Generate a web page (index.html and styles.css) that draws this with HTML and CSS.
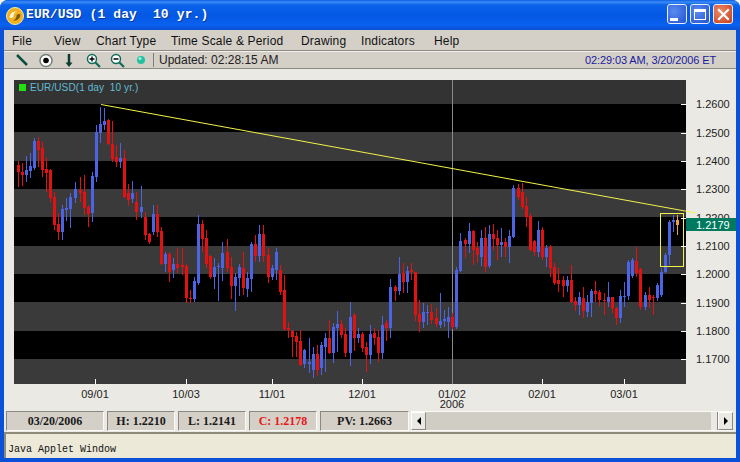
FILE: index.html
```html
<!DOCTYPE html>
<html lang="en">
<head>
<meta charset="utf-8">
<title>EUR/USD (1 day  10 yr.)</title>
<link rel="stylesheet" href="styles.css">
</head>
<body>
<div class="window">
  <header class="titlebar">
    <svg class="app-icon" width="20" height="20" viewBox="0 0 20 20">
      <circle cx="10" cy="10" r="8.5" fill="#f0b020" stroke="#fbe7a8"/>
      <path d="M4.5 11.5C5 7 8.5 5 12 5.5 9.5 6.5 8.5 8 8.5 10.5 8 12 6 12.500 4.500 11.500Z" fill="#fff6d0"/>
      <path d="M15.500 8.500C15 13 11.500 15 8 14.500 10.500 13.500 11.500 12 11.500 9.500 12 8 14 7.500 15.500 8.500Z" fill="#7a5a10"/>
    </svg>
    <span class="title-text">EUR/USD (1 day  10 yr.)</span>
    <div class="win-buttons">
      <span class="win-btn"><i class="glyph-min"></i></span>
      <span class="win-btn"><i class="glyph-max"></i></span>
      <span class="win-btn win-close">
        <svg width="13" height="13" viewBox="0 0 13 13"><path d="M2 2L11 11M11 2L2 11" stroke="#fff" stroke-width="2.200" stroke-linecap="square"/></svg>
      </span>
    </div>
  </header>
  <main class="content">
    <nav class="menubar">
      <span class="m-file">File</span>
      <span class="m-view">View</span>
      <span class="m-type">Chart Type</span>
      <span class="m-scale">Time Scale &amp; Period</span>
      <span class="m-draw">Drawing</span>
      <span class="m-ind">Indicators</span>
      <span>Help</span>
    </nav>
    <div class="toolbar">
      <svg class="tools" width="143" height="17" viewBox="0 0 143 17">
        <path d="M7 3L17 13" stroke="#0c4f40" stroke-width="2.500"/>
        <circle cx="36" cy="8.500" r="6" fill="#fff" stroke="#70807a" stroke-width="1.500"/>
        <circle cx="36" cy="8.500" r="2.800" fill="#000"/>
        <path d="M59 2V12" stroke="#0c3a30" stroke-width="2.500"/>
        <path d="M55.500 10.500H62.500L59 15Z" fill="#0c3a30"/>
        <circle cx="82" cy="7" r="4.500" fill="#fff" stroke="#0f6a58" stroke-width="1.500"/>
        <path d="M79.500 7H84.500M82 4.500V9.500" stroke="#000" stroke-width="1.400"/>
        <path d="M85.500 10.500L90 15" stroke="#0f6a58" stroke-width="2.200"/>
        <circle cx="106" cy="7" r="4.500" fill="#fff" stroke="#0f6a58" stroke-width="1.500"/>
        <path d="M103.500 7H108.500" stroke="#000" stroke-width="1.400"/>
        <path d="M109.500 10.500L114 15" stroke="#0f6a58" stroke-width="2.200"/>
        <circle cx="131" cy="8" r="4" fill="#25c0a0"/>
        <circle cx="130" cy="6.500" r="1.500" fill="#a0f0e0"/>
      </svg>
      <span class="divider"></span>
      <span class="updated">Updated: 02:28:15 AM</span>
      <span class="clock">02:29:03 AM, 3/20/2006 ET</span>
    </div>
    <svg id="chart" class="chart" width="732" height="342" viewBox="4 69 732 342"></svg>
    <div class="statusbar">
      <span class="cell c-date">03/20/2006</span>
      <span class="cell c-val">H: 1.2210</span>
      <span class="cell c-val">L: 1.2141</span>
      <span class="cell c-val c-red">C: 1.2178</span>
      <span class="cell c-pv">PV: 1.2663</span>
      <div class="scroll">
        <span class="sb-btn"><i class="arrow-left"></i></span>
        <span class="sb-track"></span>
        <span class="sb-thumb"></span>
        <span class="sb-btn"><i class="arrow-right"></i></span>
      </div>
    </div>
    <footer class="applet">Java Applet Window</footer>
  </main>
</div>
<script src="chart.js"></script>
</body>
</html>
```
FILE: styles.css
```css
* { box-sizing: border-box; }
html, body { margin: 0; padding: 0; }
body { width: 740px; height: 462px; background: #f4f4f4; overflow: hidden; font-family: "Liberation Sans", Arial, sans-serif; }
.window { width: 740px; height: 462px; display: flex; flex-direction: column; border-radius: 8px 8px 0 0; overflow: hidden; background: #0a50d8; }
.titlebar { height: 30px; flex: none; display: flex; align-items: center; padding: 0 7px 0 4px; background: linear-gradient(#0a5ee8 0, #3b8cf4 2px, #0a62ea 5px, #0458e4 16px, #0a62f0 25px, #0a4fd0 30px); }
.app-icon { margin-left: 1px; margin-top: 1px; }
.title-text { margin-left: 1px; color: #fff; font: bold 13px "Liberation Mono", monospace; letter-spacing: .13px; white-space: pre; text-shadow: 1px 1px 0 #0a3a98; margin-top: -1px; }
.win-buttons { margin-left: auto; display: flex; gap: 3px; margin-top: -2px; }
.win-btn { width: 20px; height: 20px; border: 1px solid #e8eefc; border-radius: 3px; background: radial-gradient(circle at 35% 35%, #5a8cf0, #2452d0); display: flex; align-items: center; justify-content: center; position: relative; }
.win-close { background: radial-gradient(circle at 35% 35%, #ec8a68, #c83c18); }
.glyph-min { width: 8px; height: 3px; background: #fff; margin: 10px 6px 0 0; }
.glyph-max { width: 12px; height: 11px; border: 1px solid #fff; border-top-width: 3px; }
.content { flex: 1; margin: 0 4px 4px; background: #ebe9e4; display: flex; flex-direction: column; min-height: 0; }
.menubar { height: 21px; flex: none; display: flex; align-items: center; padding: 1px 0 0 8px; background: #d4d0c8; border-bottom: 1px solid #8c8a84; font-size: 12px; letter-spacing: .18px; color: #111; }
.m-file { width: 42px; } .m-view { width: 42px; } .m-type { width: 75px; } .m-scale { width: 130px; } .m-draw { width: 60px; } .m-ind { width: 73px; }
.toolbar { height: 18px; flex: none; display: flex; align-items: center; background: #d4d0c8; border-top: 1px solid #f2f0ec; border-bottom: 1px solid #8c8a84; font-size: 12px; color: #222; }
.tools { margin-left: 6px; flex: none; }
.divider { width: 1px; height: 14px; background: #807e78; }
.updated { margin-left: 5px; }
.clock { margin-left: auto; margin-right: 20px; color: #1a1a9c; font-size: 11px; letter-spacing: -.12px; }
.chart { display: block; flex: none; }
.band-a { fill: #3a3a3a; }
.band-b { fill: #000; }
.band-top { fill: #333; }
.gridline { stroke: #8a8a8a; }
.tick { stroke: #fff; }
.bull { fill: #4a64e4; }
.bear { fill: #e21212; }
.last { fill: #f0a040; }
.rect-crisp { shape-rendering: crispEdges; }
.trend { stroke: #f2f24a; fill: none; }
.zone { stroke: #f2f24a; fill: none; shape-rendering: crispEdges; }
.axis-text { font: 11px "Liberation Sans", Arial, sans-serif; fill: #222; }
.legend-mark { fill: #22e010; }
.legend-text { font: 10px "Liberation Sans", Arial, sans-serif; letter-spacing: .1px; fill: #62bcd4; }
.tag { fill: #007a5e; }
.tag-text { font: 11px "Liberation Sans", Arial, sans-serif; fill: #fff; }
.statusbar { height: 20px; flex: none; display: flex; margin: 0 0 0 2px; gap: 3px; }
.cell { display: flex; align-items: center; justify-content: center; background: #d4d0c8; border: 1px solid; border-color: #8a8880 #fbfaf6 #fbfaf6 #8a8880; font: bold 12px "Liberation Serif", serif; color: #1a1a1a; }
.c-date { width: 98px; } .c-val { width: 68px; } .c-pv { width: 89px; margin-right: -3px; }
.c-red { color: #e81818; }
.scroll { flex: 1; display: flex; margin-right: 3px; margin-left: 2px; border-top: 1px solid #fbfaf6; border-bottom: 1px solid #fbfaf6; }
.sb-btn { width: 15px; flex: none; display: flex; align-items: center; justify-content: center; background: #ebe9e4; border: 1px solid; border-color: #fff #8a8880 #8a8880 #fff; }
.sb-track { flex: 1; background: #d0cdc4; }
.sb-thumb { width: 7px; background: #ebe9e4; border-right: 1px solid #8a8880; }
.arrow-left, .arrow-right { width: 0; height: 0; border-top: 4px solid transparent; border-bottom: 4px solid transparent; }
.arrow-left { border-right: 4px solid #000; }
.arrow-right { border-left: 4px solid #000; }
.applet { flex: 1; margin-top: 1px; background: #ece9d8; border-top: 2px solid #8c8a78; border-left: 2px solid #8c8a78; display: flex; align-items: flex-end; padding: 0 0 3px 2px; font: 10px "Liberation Mono", monospace; color: #111; }
```
FILE: chart.js
```js
// x, kind, high, body top, body bottom, low (screen pixels)
var bars = [
[18,'r',161,165,172,187],[22,'r',163,172,175,186],[26,'b',156,170,175,182],[30,'b',153,166,171,178],
[34,'b',138,141,168,170],[38,'r',137,141,150,167],[42,'r',142,148,170,177],[46,'r',158,169,173,192],
[50,'r',169,170,198,202],[54,'r',192,197,225,230],[58,'r',213,224,232,240],[62,'b',205,209,232,240],
[66,'b',198,208,210,221],[70,'b',193,197,209,228],[75,'b',182,189,198,203],[80,'r',177,190,193,202],
[84,'r',175,192,208,215],[88,'r',205,207,214,227],[92,'b',172,176,213,222],[96,'b',125,132,177,182],
[100,'b',107,124,133,143],[104,'b',108,121,125,130],[108,'r',119,120,144,145],[112,'r',121,144,159,162],
[116,'r',145,157,162,167],[120,'b',143,158,162,168],[124,'r',150,158,197,198],[128,'r',184,193,200,206],
[132,'b',181,193,199,203],[136,'r',192,202,212,220],[141,'b',186,207,212,218],[145,'r',212,217,235,240],
[149,'r',233,234,242,244],[153,'b',205,214,232,235],[157,'r',205,214,232,237],[161,'r',227,231,264,265],
[165,'b',252,254,264,272],[169,'r',252,254,272,282],[173,'b',258,264,270,278],[177,'r',248,264,268,273],
[182,'r',248,265,267,275],[186,'r',264,266,298,303],[190,'r',290,298,299,303],[194,'b',277,281,299,302],
[198,'b',215,224,283,285],[202,'r',220,224,239,252],[206,'r',230,238,264,268],[210,'r',255,256,277,279],
[214,'b',258,267,277,289],[218,'b',263,266,267,301],[222,'b',242,253,268,281],[227,'r',239,252,268,272],
[231,'r',257,267,286,299],[235,'b',273,277,286,311],[239,'b',264,267,278,296],[243,'r',252,268,288,295],
[247,'b',272,278,289,297],[251,'b',242,244,279,292],[255,'r',235,244,256,262],[259,'b',225,234,256,262],
[263,'r',225,234,256,262],[268,'r',248,255,277,283],[272,'b',265,268,277,280],[276,'b',248,252,270,280],
[280,'r',265,270,292,295],[284,'r',275,290,329,331],[288,'r',322,328,330,338],[292,'r',330,331,337,357],
[296,'r',332,336,342,357],[300,'r',330,341,365,366],[304,'b',349,350,364,368],[309,'b',338,362,364,373],
[313,'b',347,354,370,378],[317,'r',345,354,370,376],[321,'b',342,345,368,375],[325,'b',333,338,347,372],
[329,'r',320,338,353,354],[333,'b',323,327,353,363],[337,'b',311,324,328,352],[341,'r',320,324,335,338],
[345,'r',328,334,353,357],[350,'b',302,317,353,366],[354,'r',313,315,338,351],[358,'b',328,334,338,343],
[362,'r',332,334,348,352],[366,'r',342,347,355,372],[370,'b',325,334,355,364],[374,'r',328,333,338,345],
[378,'r',330,337,353,362],[382,'b',316,325,353,359],[386,'r',320,323,328,341],[390,'b',279,287,328,338],
[395,'r',285,287,291,301],[399,'b',257,274,291,295],[403,'r',263,273,282,293],[407,'b',266,271,282,293],
[411,'r',263,270,272,280],[415,'r',272,272,315,321],[419,'r',300,314,322,332],[423,'b',303,312,322,328],
[427,'b',305,312,313,325],[431,'r',304,312,320,324],[436,'r',308,318,324,327],[440,'b',293,321,325,328],
[444,'b',310,319,321,327],[448,'b',307,317,322,338],[452,'r',313,317,327,329],[456,'b',267,270,327,329],
[460,'b',233,241,271,272],[465,'r',238,240,244,258],[469,'b',223,231,244,253],[473,'r',230,231,250,265],
[477,'r',242,248,255,263],[481,'b',230,238,257,266],[485,'r',227,238,267,272],[489,'b',225,234,266,268],
[493,'r',224,234,239,250],[497,'r',230,238,245,260],[501,'b',228,242,245,257],[505,'r',238,242,247,257],
[509,'b',230,236,247,263],[513,'b',185,188,237,238],[518,'r',184,188,197,200],[522,'r',183,192,207,209],
[526,'r',197,206,217,227],[530,'r',213,216,250,251],[534,'r',240,241,252,256],[538,'b',221,230,252,257],
[542,'r',227,230,257,260],[546,'b',245,248,257,267],[550,'r',245,247,268,277],[554,'r',263,267,283,285],
[558,'r',268,280,284,292],[563,'r',276,280,286,297],[567,'b',276,280,286,292],[571,'r',265,280,302,303],
[575,'r',297,301,305,311],[579,'b',292,297,305,315],[583,'r',287,298,311,318],[587,'b',295,302,312,317],
[591,'b',289,291,303,317],[595,'r',281,291,294,302],[599,'r',290,292,300,306],[604,'r',293,300,301,315],
[608,'b',282,297,302,307],[612,'r',297,297,308,313],[616,'r',307,308,318,325],[620,'b',290,296,318,323],
[624,'b',282,296,297,307],[628,'b',260,262,296,300],[632,'b',258,260,276,278],[636,'r',247,261,273,277],
[640,'r',268,269,307,310],[645,'b',292,295,307,310],[649,'r',287,295,300,308],[653,'r',295,297,298,315],
[657,'b',283,285,298,301],[661,'b',268,272,295,297],[665,'b',253,255,272,273],[669,'b',220,222,255,265],
[673,'b',215,220,222,232],[677,'o',215,220,225,235]
];
var svg = document.getElementById('chart');
var NS = 'http://www.w3.org/2000/svg';
function el(name, attrs, text) {
  var n = document.createElementNS(NS, name);
  for (var k in attrs) n.setAttribute(k, attrs[k]);
  if (text) n.textContent = text;
  svg.appendChild(n);
  return n;
}
function rect(x, y, w, h, cls) { el('rect', { x: x, y: y, width: w, height: h, 'class': cls + ' rect-crisp' }); }
function line(x1, y1, x2, y2, cls) { el('line', { x1: x1, y1: y1, x2: x2, y2: y2, 'class': cls, 'shape-rendering': 'crispEdges' }); }

// alternating price bands
var edges = [80, 104, 132, 161, 189, 217, 246, 274, 302, 331, 359, 384];
for (var i = 0; i < edges.length - 1; i++) {
  rect(14, edges[i], 672, edges[i + 1] - edges[i], i === 0 ? 'band-top' : (i % 2 ? 'band-b' : 'band-a'));
}
line(452.5, 80, 452.5, 384, 'gridline');

// candles
var cls = { r: 'bear', b: 'bull', o: 'last' };
bars.forEach(function (d) {
  rect(d[0], d[2], 1, d[5] - d[2], cls[d[1]]);
  rect(d[0] - 1, d[3], 3, Math.max(d[4] - d[3], 1), cls[d[1]]);
});

// overlays
el('line', { x1: 101, y1: 104.5, x2: 696, y2: 213, 'class': 'trend' });
el('rect', { x: 660.5, y: 213.5, width: 23, height: 53, 'class': 'zone' });

// legend
rect(19, 84, 7, 7, 'legend-mark');
el('text', { x: 30, y: 91, 'class': 'legend-text' }, 'EUR/USD(1 day \u00a010 yr.)');

// price axis
var levels = [[104, '1.2600'], [133, '1.2500'], [161, '1.2400'], [189, '1.2300'], [218, '1.2200'], [246, '1.2100'], [274, '1.2000'], [303, '1.1900'], [331, '1.1800'], [359, '1.1700']];
levels.forEach(function (l) {
  line(681, l[0] + .5, 686, l[0] + .5, 'tick');
  el('text', { x: 696, y: l[0] + 4, 'class': 'axis-text' }, l[1]);
});
rect(686, 218, 54, 13, 'tag');
el('text', { x: 696, y: 229, 'class': 'tag-text' }, '1.2179');

// time axis
[[95, '09/01'], [186, '10/03'], [272, '11/01'], [362, '12/01'], [452, '01/02'], [542, '02/01'], [624, '03/01']].forEach(function (t) {
  if (t[0] !== 452) line(t[0] + .5, 379, t[0] + .5, 384, 'tick');
  el('text', { x: t[0], y: 398, 'text-anchor': 'middle', 'class': 'axis-text' }, t[1]);
});
el('text', { x: 452, y: 408, 'text-anchor': 'middle', 'class': 'axis-text' }, '2006');
```
